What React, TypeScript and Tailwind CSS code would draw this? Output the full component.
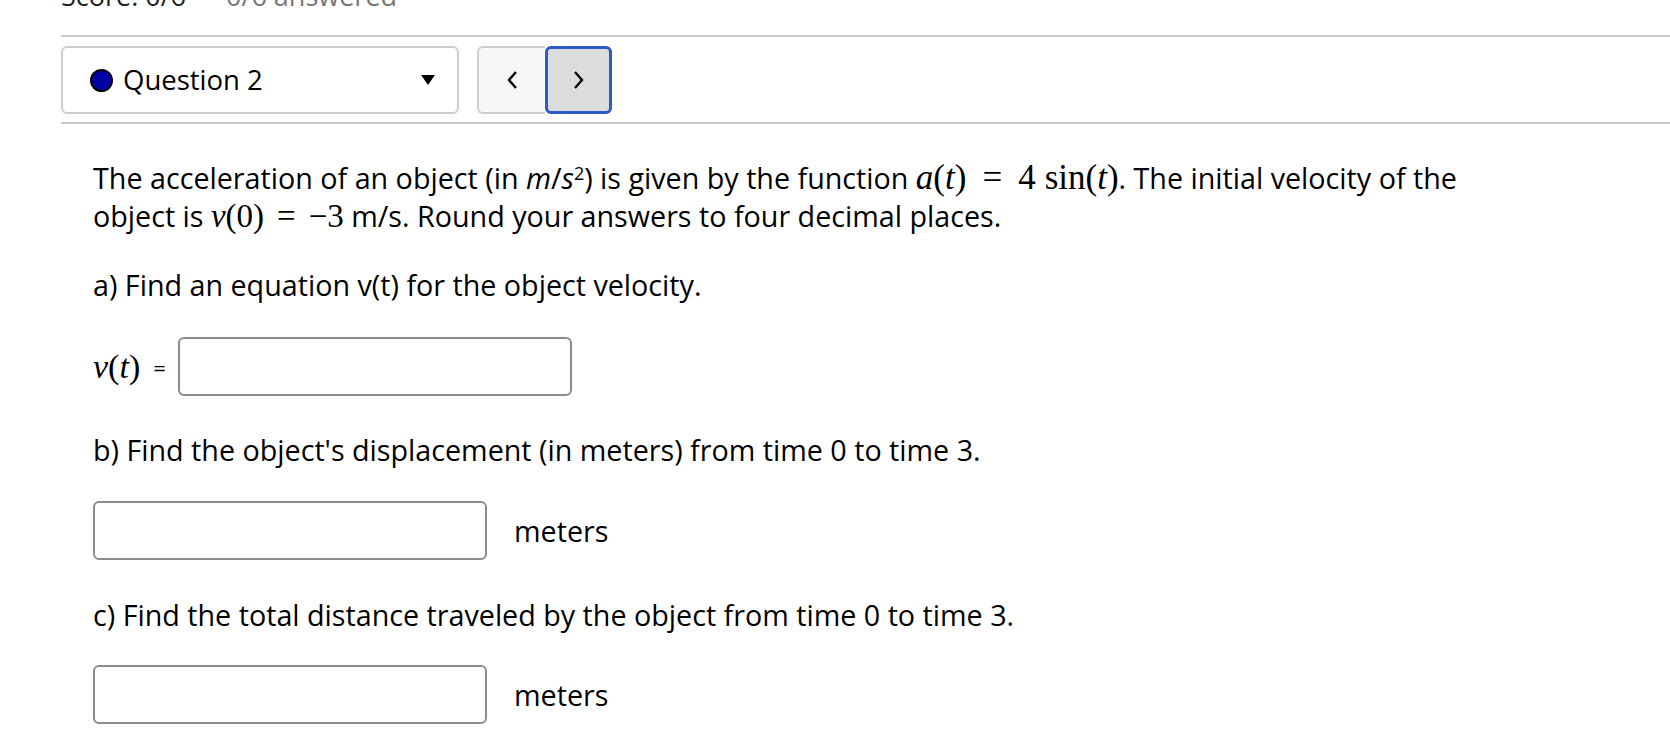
import React from "react";

const sans = "font-['Open_Sans','Liberation_Sans',sans-serif]";
const tex = "font-['Liberation_Serif','DejaVu_Serif',serif]";

function M({ children, big = false }: { children: React.ReactNode; big?: boolean }) {
  return (
    <span className={`${tex} font-normal leading-[20px] ${big ? "text-[35px]" : "text-[33px]"}`}>
      {children}
    </span>
  );
}

function I({ children }: { children: React.ReactNode }) {
  return <i className="italic">{children}</i>;
}

function Eq({ wide = false }: { wide?: boolean }) {
  return <span className={wide ? "mx-[16px]" : "mx-[13px]"}>=</span>;
}

function AnswerBox({ className = "" }: { className?: string }) {
  return (
    <input
      type="text"
      className={`h-[59px] w-[394px] rounded-[6px] border-2 border-[#8c8c8c] bg-white px-3 outline-none ${className}`}
    />
  );
}

export default function App() {
  return (
    <div className={`${sans} h-[750px] w-full overflow-hidden bg-white text-[28.7px] font-medium text-black`}>
      <div className="pl-[61px]">
        {/* score strip, mostly scrolled off the top */}
        <div className="-mt-[19px] flex h-[30px] items-end gap-[40px] text-[27px] leading-[30px]">
          <span className="text-[#222]">Score: 0/6</span>
          <span className="text-[#777]">0/6 answered</span>
        </div>

        <div className="mt-[24px] border-t-2 border-[#cacaca]" />

        <div className="mt-[9px] flex items-stretch">
          <button className="flex h-[68px] w-[398px] items-center rounded-[6px] border-2 border-[#cdcdcd] bg-white pl-[27px] pr-[22px] text-left">
            <span className="h-[23px] w-[23px] rounded-full border-2 border-black bg-[#0000a8]" />
            <span className="ml-[10px] flex-1 text-[27.5px]">Question 2</span>
            <svg width="14" height="10" viewBox="0 0 14 10">
              <path d="M0 0H14L7 10Z" fill="#000" />
            </svg>
          </button>
          <div className="ml-[18px] flex">
            <button className="flex h-[68px] w-[68px] items-center justify-center rounded-l-[6px] border-2 border-r-0 border-[#cdcdcd] bg-[#f7f7f7]">
              <svg width="12" height="20" viewBox="0 0 12 20">
                <path d="M10 2L3 10l7 8" fill="none" stroke="#000" strokeWidth="2.4" />
              </svg>
            </button>
            <button className="flex h-[68px] w-[67px] items-center justify-center rounded-[6px] border-[3px] border-[#2a5cc4] bg-[#dcdcdc]">
              <svg width="12" height="20" viewBox="0 0 12 20">
                <path d="M2 2l7 8-7 8" fill="none" stroke="#000" strokeWidth="2.4" />
              </svg>
            </button>
          </div>
        </div>

        <div className="mt-[8px] border-t-2 border-[#cacaca]" />

        <div className="pl-[32px] leading-[38px]">
          <p className="mt-[35px]">
            The acceleration of an object (in <I>m</I>/<I>s</I>
            <sup className="text-[18px]">2</sup>) is given by the function{" "}
            <M big>
              <I>a</I>(<I>t</I>)<Eq wide />4<span className="ml-[9px]">sin</span>(<I>t</I>)
            </M>
            . The initial velocity of the
            <br />
            object is{" "}
            <M>
              <I>v</I>(0)<Eq />−3
            </M>{" "}
            m/s. Round your answers to four decimal places.
          </p>

          <p className="mt-[31px]">a) Find an equation v(t) for the object velocity.</p>

          <div className="mt-[33px] flex items-center">
            <span className={`${tex} text-[34px] font-normal`}>
              <I>v</I>(<I>t</I>)
            </span>
            <span className="ml-[13px] mr-[12px] text-[22px]">=</span>
            <AnswerBox />
          </div>

          <p className="mt-[35px]">b) Find the object's displacement (in meters) from time 0 to time 3.</p>

          <div className="mt-[32px] flex items-center">
            <AnswerBox />
            <span className="ml-[27px]">meters</span>
          </div>

          <p className="mt-[36px]">c) Find the total distance traveled by the object from time 0 to time 3.</p>

          <div className="mt-[31px] flex items-center">
            <AnswerBox />
            <span className="ml-[27px]">meters</span>
          </div>
        </div>
      </div>
    </div>
  );
}
